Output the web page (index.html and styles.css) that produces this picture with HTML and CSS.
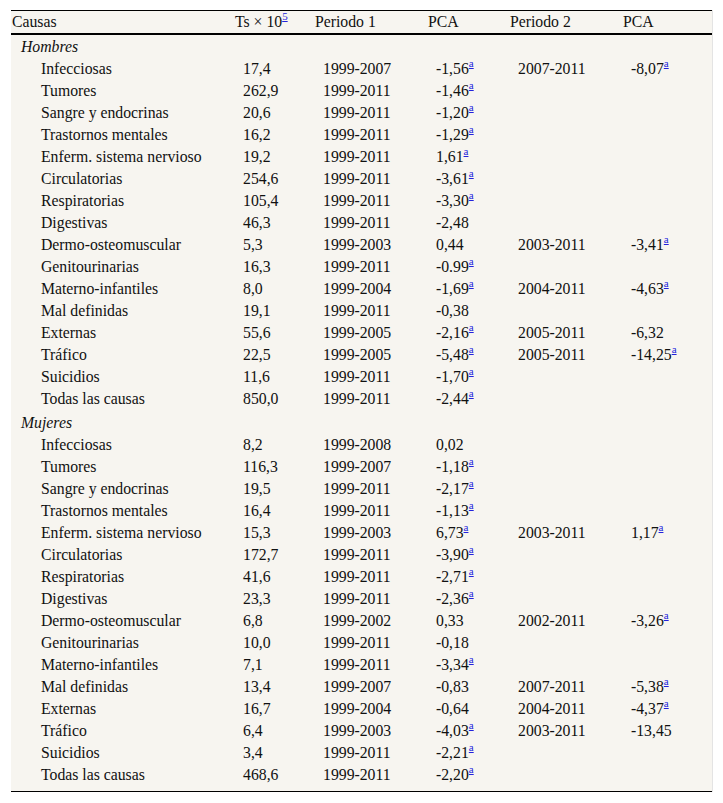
FILE: index.html
```html
<!DOCTYPE html>
<html lang="es">
<head>
<meta charset="utf-8">
<link rel="stylesheet" href="styles.css">
</head>
<body>
<div class="wrap">
<table class="tbl">
<colgroup>
<col class="c1"><col class="c2"><col class="c3"><col class="c4"><col class="c5"><col class="c6">
</colgroup>
<thead>
<tr><th>Causas</th><th>Ts × 10<a class="ref" href="#">5</a></th><th>Periodo 1</th><th>PCA</th><th>Periodo 2</th><th>PCA</th></tr>
</thead>
<tbody>
<tr class="group g1"><td colspan="6"><em>Hombres</em></td></tr>
<tr><td class="name">Infecciosas</td><td>17,4</td><td>1999-2007</td><td>-1,56<a class="ref" href="#">a</a></td><td>2007-2011</td><td>-8,07<a class="ref" href="#">a</a></td></tr>
<tr><td class="name">Tumores</td><td>262,9</td><td>1999-2011</td><td>-1,46<a class="ref" href="#">a</a></td><td></td><td></td></tr>
<tr><td class="name">Sangre y endocrinas</td><td>20,6</td><td>1999-2011</td><td>-1,20<a class="ref" href="#">a</a></td><td></td><td></td></tr>
<tr><td class="name">Trastornos mentales</td><td>16,2</td><td>1999-2011</td><td>-1,29<a class="ref" href="#">a</a></td><td></td><td></td></tr>
<tr><td class="name">Enferm. sistema nervioso</td><td>19,2</td><td>1999-2011</td><td>1,61<a class="ref" href="#">a</a></td><td></td><td></td></tr>
<tr><td class="name">Circulatorias</td><td>254,6</td><td>1999-2011</td><td>-3,61<a class="ref" href="#">a</a></td><td></td><td></td></tr>
<tr><td class="name">Respiratorias</td><td>105,4</td><td>1999-2011</td><td>-3,30<a class="ref" href="#">a</a></td><td></td><td></td></tr>
<tr><td class="name">Digestivas</td><td>46,3</td><td>1999-2011</td><td>-2,48</td><td></td><td></td></tr>
<tr><td class="name">Dermo-osteomuscular</td><td>5,3</td><td>1999-2003</td><td>0,44</td><td>2003-2011</td><td>-3,41<a class="ref" href="#">a</a></td></tr>
<tr><td class="name">Genitourinarias</td><td>16,3</td><td>1999-2011</td><td>-0.99<a class="ref" href="#">a</a></td><td></td><td></td></tr>
<tr><td class="name">Materno-infantiles</td><td>8,0</td><td>1999-2004</td><td>-1,69<a class="ref" href="#">a</a></td><td>2004-2011</td><td>-4,63<a class="ref" href="#">a</a></td></tr>
<tr><td class="name">Mal definidas</td><td>19,1</td><td>1999-2011</td><td>-0,38</td><td></td><td></td></tr>
<tr><td class="name">Externas</td><td>55,6</td><td>1999-2005</td><td>-2,16<a class="ref" href="#">a</a></td><td>2005-2011</td><td>-6,32</td></tr>
<tr><td class="name">Tráfico</td><td>22,5</td><td>1999-2005</td><td>-5,48<a class="ref" href="#">a</a></td><td>2005-2011</td><td>-14,25<a class="ref" href="#">a</a></td></tr>
<tr><td class="name">Suicidios</td><td>11,6</td><td>1999-2011</td><td>-1,70<a class="ref" href="#">a</a></td><td></td><td></td></tr>
<tr><td class="name">Todas las causas</td><td>850,0</td><td>1999-2011</td><td>-2,44<a class="ref" href="#">a</a></td><td></td><td></td></tr>
<tr class="group g2"><td colspan="6"><em>Mujeres</em></td></tr>
<tr><td class="name">Infecciosas</td><td>8,2</td><td>1999-2008</td><td>0,02</td><td></td><td></td></tr>
<tr><td class="name">Tumores</td><td>116,3</td><td>1999-2007</td><td>-1,18<a class="ref" href="#">a</a></td><td></td><td></td></tr>
<tr><td class="name">Sangre y endocrinas</td><td>19,5</td><td>1999-2011</td><td>-2,17<a class="ref" href="#">a</a></td><td></td><td></td></tr>
<tr><td class="name">Trastornos mentales</td><td>16,4</td><td>1999-2011</td><td>-1,13<a class="ref" href="#">a</a></td><td></td><td></td></tr>
<tr><td class="name">Enferm. sistema nervioso</td><td>15,3</td><td>1999-2003</td><td>6,73<a class="ref" href="#">a</a></td><td>2003-2011</td><td>1,17<a class="ref" href="#">a</a></td></tr>
<tr><td class="name">Circulatorias</td><td>172,7</td><td>1999-2011</td><td>-3,90<a class="ref" href="#">a</a></td><td></td><td></td></tr>
<tr><td class="name">Respiratorias</td><td>41,6</td><td>1999-2011</td><td>-2,71<a class="ref" href="#">a</a></td><td></td><td></td></tr>
<tr><td class="name">Digestivas</td><td>23,3</td><td>1999-2011</td><td>-2,36<a class="ref" href="#">a</a></td><td></td><td></td></tr>
<tr><td class="name">Dermo-osteomuscular</td><td>6,8</td><td>1999-2002</td><td>0,33</td><td>2002-2011</td><td>-3,26<a class="ref" href="#">a</a></td></tr>
<tr><td class="name">Genitourinarias</td><td>10,0</td><td>1999-2011</td><td>-0,18</td><td></td><td></td></tr>
<tr><td class="name">Materno-infantiles</td><td>7,1</td><td>1999-2011</td><td>-3,34<a class="ref" href="#">a</a></td><td></td><td></td></tr>
<tr><td class="name">Mal definidas</td><td>13,4</td><td>1999-2007</td><td>-0,83</td><td>2007-2011</td><td>-5,38<a class="ref" href="#">a</a></td></tr>
<tr><td class="name">Externas</td><td>16,7</td><td>1999-2004</td><td>-0,64</td><td>2004-2011</td><td>-4,37<a class="ref" href="#">a</a></td></tr>
<tr><td class="name">Tráfico</td><td>6,4</td><td>1999-2003</td><td>-4,03<a class="ref" href="#">a</a></td><td>2003-2011</td><td>-13,45</td></tr>
<tr><td class="name">Suicidios</td><td>3,4</td><td>1999-2011</td><td>-2,21<a class="ref" href="#">a</a></td><td></td><td></td></tr>
<tr class="last"><td class="name">Todas las causas</td><td>468,6</td><td>1999-2011</td><td>-2,20<a class="ref" href="#">a</a></td><td></td><td></td></tr>
</tbody>
</table>
</div>
</body>
</html>
```
FILE: styles.css
```css
html, body {
  margin: 0;
  padding: 0;
  background: #ffffff;
}
body {
  font-family: "Liberation Serif", "Times New Roman", serif;
  font-size: 15.75px;
  color: #111111;
}
.wrap {
  margin: 10px 0 0 11px;
  width: 701px;
  background: #f7f5f0;
  border-right: 1px solid #e4e4e4;
}
.tbl {
  width: 701px;
  table-layout: fixed;
  border-collapse: collapse;
  border-top: 1px solid #000;
  border-bottom: 1px solid #000;
  font-family: "Liberation Serif", "Times New Roman", serif;
  font-size: 15.75px;
}
.tbl th,
.tbl td {
  font-family: "Liberation Serif", "Times New Roman", serif;
}
.c1 { width: 223px; }
.c2 { width: 80px; }
.c3 { width: 113px; }
.c4 { width: 82px; }
.c5 { width: 113px; }
.c6 { width: 90px; }
thead tr {
  border-bottom: 2px solid #000;
}
th {
  font-weight: normal;
  text-align: left;
  padding: 0 0 0 1px;
  height: 22px;
  line-height: 22px;
  vertical-align: top;
  white-space: nowrap;
}
td {
  padding: 0 0 0 9px;
  height: 22px;
  line-height: 22px;
  vertical-align: top;
  white-space: nowrap;
}
td.name {
  padding-left: 30px;
}
.group td {
  padding-left: 10px;
}
.g1 td { padding-top: 1px; }
.g2 td { padding-top: 2px; }
.last td { padding-bottom: 5px; }
.ref {
  color: #2222dd;
  text-decoration: underline;
  font-family: "Liberation Serif", "Times New Roman", serif;
  font-size: 11px;
  line-height: 0;
  vertical-align: 7px;
}
```
